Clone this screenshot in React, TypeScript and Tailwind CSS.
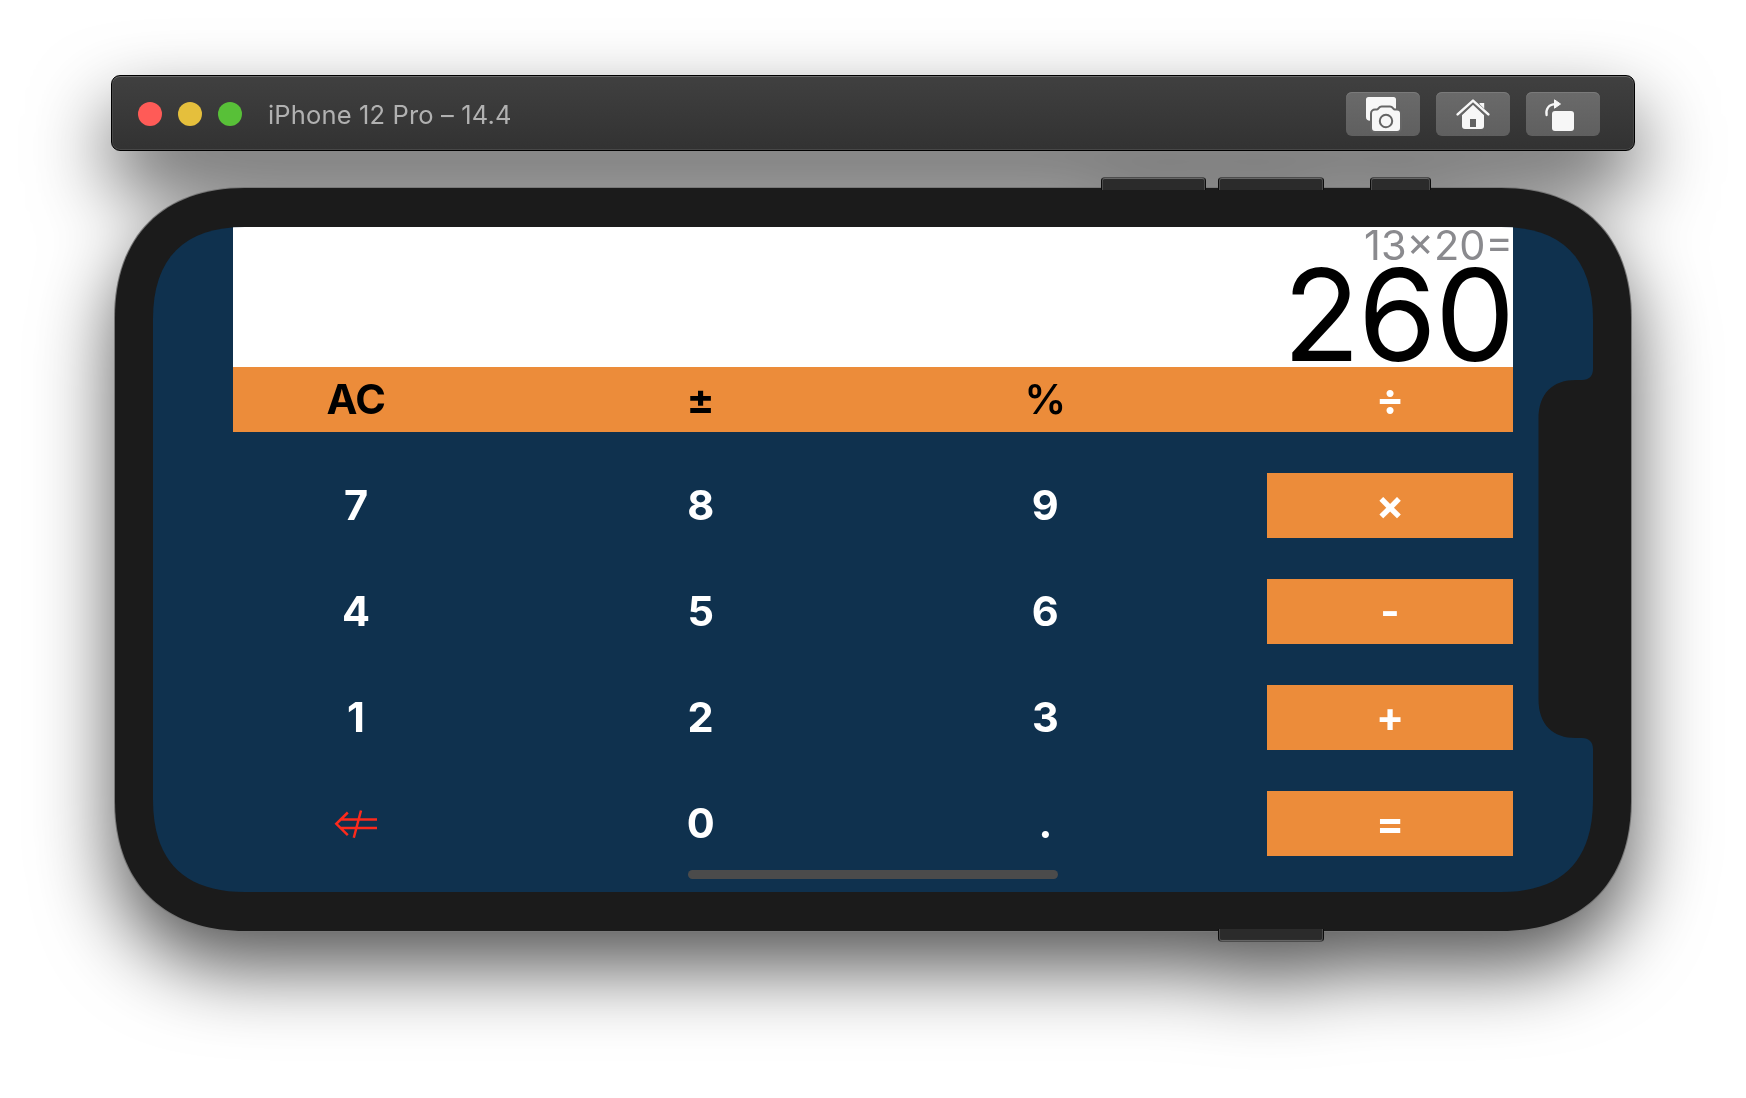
import type { ReactNode } from "react";

/**
 * Rounded rectangle whose corners ease into the sides: each corner spans
 * `e` pixels, and `k` is how far its control points stay from the corner.
 */
function softRect(w: number, h: number, e: number, k: number): string {
  return [
    `M${e} 0 H${w - e}`,
    `C${w - k} 0 ${w} ${k} ${w} ${e} V${h - e}`,
    `C${w} ${h - k} ${w - k} ${h} ${w - e} ${h} H${e}`,
    `C${k} ${h} 0 ${h - k} 0 ${h - e} V${e}`,
    `C0 ${k} ${k} 0 ${e} 0 Z`,
  ].join(" ");
}

const clip = (w: number, h: number, e: number, k: number) => ({
  clipPath: `path("${softRect(w, h, e, k)}")`,
});

function ScreenshotIcon() {
  return (
    <svg width="74" height="44" viewBox="0 0 74 44" fill="none">
      <path
        d="M22.500 5h25a2.500 2.500 0 0 1 2.500 2.500V20H27l-2.800 8.800C21.500 28.800 20 27.500 20 25V7.500A2.500 2.500 0 0 1 22.500 5Z"
        fill="#f7f7f7"
      />
      <path
        d="M29 18.500h1.800c.9 0 1.500-.3 2-1l.9-1.100c.5-.7 1.200-1 2-1h8.200c.8 0 1.500.3 2 1l.9 1.100c.5.7 1.100 1 2 1H51a3 3 0 0 1 3 3V36a3 3 0 0 1-3 3H29a3 3 0 0 1-3-3V21.500a3 3 0 0 1 3-3Z"
        fill="#f7f7f7"
        stroke="#666"
        strokeWidth="4"
        paintOrder="stroke"
      />
      <circle cx="40" cy="29" r="6.200" stroke="#646464" strokeWidth="2" />
    </svg>
  );
}

function HomeIcon() {
  return (
    <svg width="74" height="44" viewBox="0 0 74 44" fill="none">
      <path d="M43.500 11h4.700v9h-4.700z" fill="#f7f7f7" />
      <path
        d="M26 22.500 37 12l11 10.500V34a3 3 0 0 1-3 3H29a3 3 0 0 1-3-3Z"
        fill="#f7f7f7"
      />
      <path d="m21.500 24 15.500-14.600 15.500 14.600" stroke="#666" strokeWidth="5" />
      <path
        d="m21.600 22.400 15.400-13.800 15.400 13.800"
        stroke="#f7f7f7"
        strokeWidth="2.500"
        strokeLinecap="round"
        strokeLinejoin="round"
      />
      <path d="M34 27h6v8h-6z" fill="#626262" />
    </svg>
  );
}

function RotateIcon() {
  return (
    <svg width="74" height="44" viewBox="0 0 74 44" fill="none">
      <rect x="26" y="19" width="22" height="20" rx="3" fill="#f7f7f7" />
      <path
        d="M20.600 23c-1-6 2-10.800 9-10.800"
        stroke="#f7f7f7"
        strokeWidth="2.300"
        strokeLinecap="round"
      />
      <path d="M28.500 7.800 34.500 12l-6 4.200Z" fill="#f7f7f7" stroke="#f7f7f7" strokeLinejoin="round" />
    </svg>
  );
}

function ToolButton({ label, children }: { label: string; children: ReactNode }) {
  return (
    <button
      aria-label={label}
      className="h-11 w-[74px] rounded-[6px] bg-linear-to-b from-[#6a6a6a] to-[#5f5f5f] shadow-[inset_0_1px_0_#7a7a7a]"
    >
      {children}
    </button>
  );
}

function TitleBar() {
  return (
    <header className="flex h-[76px] items-center rounded-[9px] border border-black bg-linear-to-b from-[#404040] to-[#323232] pt-[2px] pr-[34px] pl-[26px] shadow-[inset_0_1px_0_#6b6b6b,inset_0_0_0_1px_#474747]">
      <div className="flex gap-4">
        <span className="size-6 rounded-full bg-[#ff5b57]" />
        <span className="size-6 rounded-full bg-[#e5bf3c]" />
        <span className="size-6 rounded-full bg-[#58c038]" />
      </div>
      <h1 className="ml-[26px] pt-[3px] text-[25.500px] tracking-[0.15px] text-[#b1b1b1]">
        iPhone 12 Pro – 14.4
      </h1>
      <div className="ml-auto flex gap-4">
        <ToolButton label="Screenshot">
          <ScreenshotIcon />
        </ToolButton>
        <ToolButton label="Home">
          <HomeIcon />
        </ToolButton>
        <ToolButton label="Rotate">
          <RotateIcon />
        </ToolButton>
      </div>
    </header>
  );
}

function BackspaceArrow() {
  return (
    <svg
      aria-label="Backspace"
      className="mr-[2px]"
      width="44"
      height="30"
      viewBox="0 0 44 30"
      fill="none"
      stroke="#fc2a1c"
      strokeWidth="2.500"
    >
      <path d="M14.800 3.500 3.300 14.800l11.500 11.300M7.500 10.600H44M7.500 19.100H44M28 1.500 20.800 28.800" />
    </svg>
  );
}

function Key({ children, className = "" }: { children: ReactNode; className?: string }) {
  return (
    <button className={`flex h-[65px] items-center justify-center ${className}`}>{children}</button>
  );
}

const rows = [
  ["7", "8", "9", "×"],
  ["4", "5", "6", "-"],
  ["1", "2", "3", "+"],
  ["back", "0", ".", "="],
];

function Calculator() {
  return (
    <div className="mx-auto w-[1280px] text-[41.500px] font-bold text-white">
      <div className="flex h-[140px] flex-col items-end bg-white font-normal">
        <div className="h-[36px] text-[41.500px] leading-[36px] text-[#8a8a8e]">13×20=</div>
        <div className="text-[127px] leading-[104px] tracking-[-2px] text-black">260</div>
      </div>
      <div className="grid grid-cols-4 gap-x-[98.600px] bg-[#ec8c3a] text-black">
        <Key className="tracking-[-0.5px]">AC</Key>
        <Key>±</Key>
        <Key className="font-semibold">%</Key>
        <Key className="text-white">÷</Key>
      </div>
      <div className="mt-[41px] grid grid-cols-4 gap-x-[98.600px] gap-y-[41px]">
        {rows.flat().map((k, i) => (
          <Key key={k} className={i % 4 === 3 ? "bg-[#ec8c3a]" : ""}>
            {k === "back" ? <BackspaceArrow /> : k}
          </Key>
        ))}
      </div>
    </div>
  );
}

function Notch() {
  return (
    <svg className="absolute top-[142px] right-0" width="56" height="380" viewBox="0 0 56 380">
      <path
        d="M56 0C56 7 52 11 45 11H39C16 11 1.500 24 1.500 50V330C1.500 356 16 369 39 369H45C52 369 56 373 56 380Z"
        fill="#1b1b1b"
      />
    </svg>
  );
}

const sideButton =
  "absolute h-[13px] rounded-t-[4px] border border-b-0 border-x-[#0c0c0c] border-t-[#4c4c4c] bg-[#2b2b2b] shadow-[inset_0_1px_0_#666,inset_1px_0_0_#4a4a4a,inset_-1px_0_0_#4a4a4a]";

function Phone() {
  return (
    <div className="relative mx-[3px] mt-[36px] h-[745px] w-[1518px]">
      <div className="h-[745px] bg-[#787878] p-px" style={clip(1518, 745, 131, 48.7)}>
        <div className="h-[743px] bg-[#1b1b1b] px-[38px] pt-[39px]" style={clip(1516, 743, 130, 48.4)}>
          <div className="relative h-[665px] w-[1440px] bg-[#0f314e]" style={clip(1440, 665, 92, 31.2)}>
            <Calculator />
            <Notch />
            <div className="absolute bottom-[13px] left-[535px] h-[9px] w-[370px] rounded-full bg-[#4b4b4b]" />
          </div>
        </div>
      </div>
      <div className={`${sideButton} top-[-10px] left-[987px] w-[105px]`} />
      <div className={`${sideButton} top-[-10px] left-[1104px] w-[106px]`} />
      <div className={`${sideButton} top-[-10px] left-[1256px] w-[61px]`} />
      <div className={`${sideButton} bottom-[-10px] left-[1104px] w-[106px] rotate-180`} />
    </div>
  );
}

export default function App() {
  return (
    <main className="h-[1098px] w-[1746px] overflow-hidden bg-white px-[111px] pt-[75px] font-['Inter',sans-serif]">
      <div className="drop-shadow-[0_36px_39px_rgba(0,0,0,0.66)]">
        <TitleBar />
        <Phone />
      </div>
    </main>
  );
}
